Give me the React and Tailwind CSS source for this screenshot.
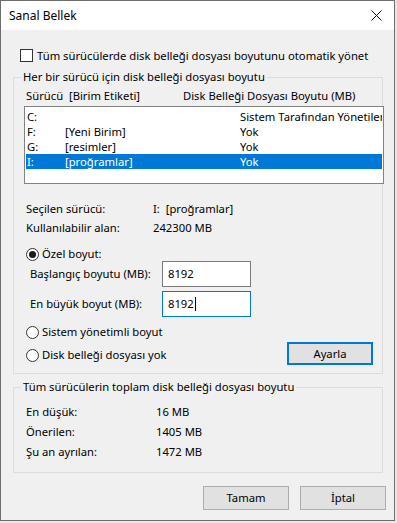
const Radio = ({ checked }) => (
  <span className="flex h-[13px] w-[13px] shrink-0 items-center justify-center rounded-full border border-[#333333] bg-white">
    {checked && <span className="h-[7px] w-[7px] rounded-full bg-[#1a1a1a]" />}
  </span>
);

const GroupBox = ({ title, className, children }) => (
  <div className={`relative ml-[12px] w-[370px] border border-[#dcdcdc] ${className}`}>
    <span className="absolute -top-[9px] left-[7px] bg-[#f0f0f0] px-[2px] leading-[16px]">{title}</span>
    {children}
  </div>
);

const drives = [
  { letter: "C:", label: "", size: "Sistem Tarafından Yönetilen" },
  { letter: "F:", label: "[Yeni Birim]", size: "Yok" },
  { letter: "G:", label: "[resimler]", size: "Yok" },
  { letter: "I:", label: "[proğramlar]", size: "Yok", selected: true },
];

const totals = [
  ["En düşük:", "16 MB"],
  ["Önerilen:", "1405 MB"],
  ["Şu an ayrılan:", "1472 MB"],
];

export default function App() {
  return (
    <div className="h-[523px] w-[397px] bg-[#e8e8e8] font-['Noto_Sans',sans-serif] text-[11.25px] leading-[16px] text-black">
      <div className="flex h-[521px] w-[395px] flex-col border border-[#6d6d6d] bg-[#f0f0f0]">
        {/* title bar */}
        <div className="flex h-[29px] shrink-0 items-center bg-white pl-[8px] pr-[12px]">
          <span className="text-[12px]">Sanal Bellek</span>
          <svg className="ml-auto" width="11" height="11" viewBox="0 0 11 11">
            <path d="M0.5 0.5 L10.5 10.5 M10.5 0.5 L0.5 10.5" stroke="#111" strokeWidth="1" />
          </svg>
        </div>

        {/* auto manage */}
        <div className="mt-[19px] flex h-[13px] items-center pl-[19px]">
          <span className="h-[13px] w-[13px] shrink-0 border border-[#333333] bg-white" />
          <span className="ml-[4px] whitespace-nowrap">Tüm sürücülerde disk belleği dosyası boyutunu otomatik yönet</span>
        </div>

        <GroupBox title="Her bir sürücü için disk belleği dosyası boyutu" className="mt-[15px] h-[297px]">
          <div className="mt-[10px] flex h-[16px] pl-[12px]">
            <span className="w-[157px] whitespace-pre">Sürücü  [Birim Etiketi]</span>
            <span>Disk Belleği Dosyası Boyutu (MB)</span>
          </div>

          <div className="ml-[10px] mt-[2px] h-[78px] w-[360px] border border-[#828282] bg-white pt-[2px]">
            {drives.map((d) => (
              <div
                key={d.letter}
                className={`mx-[1px] flex h-[15px] items-center overflow-hidden whitespace-nowrap pl-[1px] ${
                  d.selected ? "bg-[#0078d7] text-white" : ""
                }`}
              >
                <span className="w-[38px] shrink-0">{d.letter}</span>
                <span className="w-[175px] shrink-0">{d.label}</span>
                <span>{d.size}</span>
              </div>
            ))}
          </div>

          <div className="mt-[17px] flex h-[16px] pl-[12px]">
            <span className="w-[127px]">Seçilen sürücü:</span>
            <span className="whitespace-pre">I:  [proğramlar]</span>
          </div>
          <div className="mt-[3px] flex h-[16px] pl-[12px]">
            <span className="w-[127px]">Kullanılabilir alan:</span>
            <span>242300 MB</span>
          </div>

          <div className="mt-[11px] flex h-[14px] items-center gap-[3px] pl-[12px]">
            <Radio checked />
            <span>Özel boyut:</span>
          </div>

          <div className="flex h-[26px] items-center pl-[16px]">
            <span className="w-[132px]">Başlangıç boyutu (MB):</span>
            <div className="flex h-[26px] w-[89px] items-center border border-[#7a7a7a] bg-white pl-[5px]">8192</div>
          </div>
          <div className="mt-[4px] flex h-[26px] items-center pl-[16px]">
            <span className="w-[132px]">En büyük boyut (MB):</span>
            <div className="flex h-[26px] w-[89px] items-center border border-[#0078d7] bg-white pl-[5px]">
              8192
              <span className="ml-[1px] h-[14px] w-[1px] bg-black" />
            </div>
          </div>

          <div className="mt-[8px] flex h-[14px] items-center gap-[3px] pl-[12px]">
            <Radio />
            <span>Sistem yönetimli boyut</span>
          </div>

          <div className="mt-[3px] flex h-[23px] items-start pl-[12px] pr-[9px]">
            <div className="mt-[6px] flex h-[14px] items-center gap-[3px]">
              <Radio />
              <span>Disk belleği dosyası yok</span>
            </div>
            <button
              type="button"
              className="ml-auto flex h-[23px] w-[86px] items-center justify-center border-2 border-[#0078d7] bg-[#e1e1e1]"
            >
              Ayarla
            </button>
          </div>
        </GroupBox>

        <GroupBox title="Tüm sürücülerin toplam disk belleği dosyası boyutu" className="mt-[13px] h-[86px] pt-[16px]">
          {totals.map(([label, value], i) => (
            <div key={label} className={`flex h-[16px] pl-[12px] ${i > 0 ? "mt-[4px]" : ""}`}>
              <span className="w-[130px]">{label}</span>
              <span>{value}</span>
            </div>
          ))}
        </GroupBox>

        <div className="mt-[13px] flex justify-end gap-[11px] pr-[8px]">
          <button type="button" className="flex h-[24px] w-[86px] items-center justify-center border border-[#adadad] bg-[#e1e1e1]">
            Tamam
          </button>
          <button type="button" className="flex h-[24px] w-[86px] items-center justify-center border border-[#adadad] bg-[#e1e1e1]">
            İptal
          </button>
        </div>
      </div>
    </div>
  );
}
